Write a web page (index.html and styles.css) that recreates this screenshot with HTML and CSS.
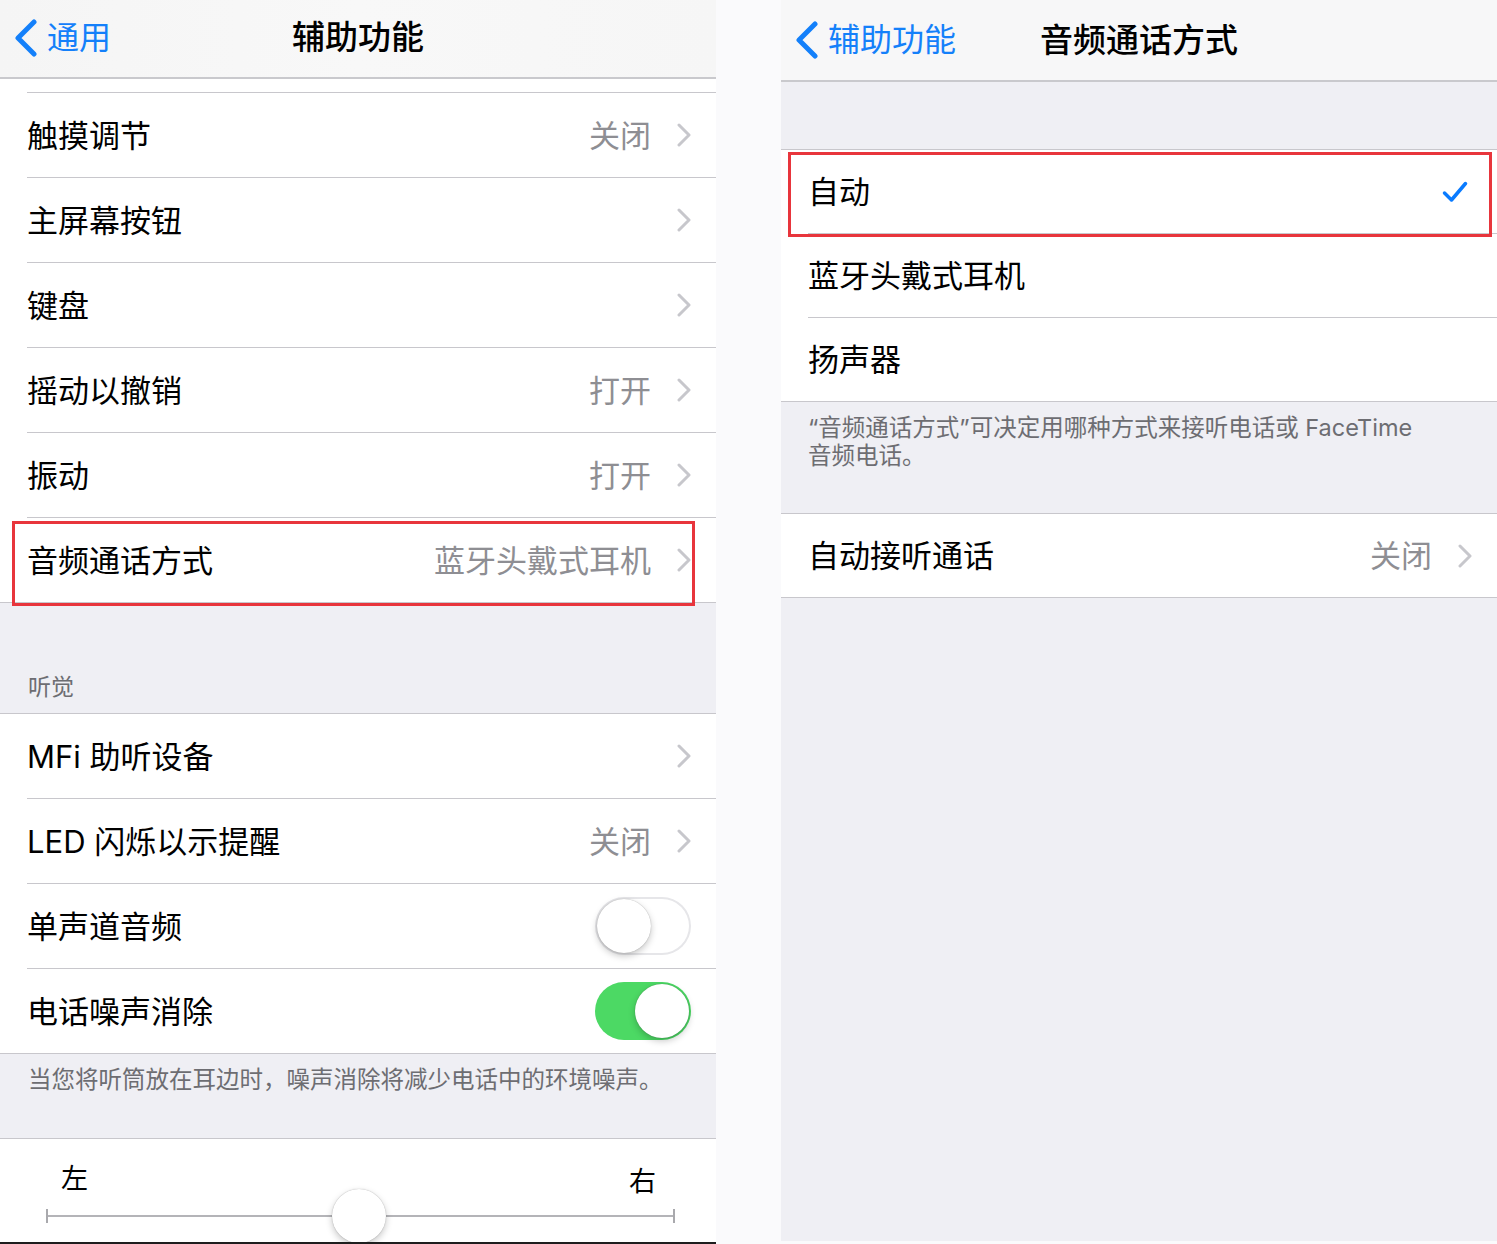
FILE: index.html
```html
<!DOCTYPE html>
<html lang="zh-CN">
<head>
<meta charset="utf-8">
<title>辅助功能 / 音频通话方式</title>
<link rel="stylesheet" href="styles.css">
</head>
<body>
<div class="screen">
  <section class="panel panel-left">
    <header class="nav nav-left">
      <div class="back">
        <svg class="nav-chev" viewBox="0 0 24 38"><polyline points="20,3 4,19 20,35"/></svg>
        <span>通用</span>
      </div>
      <h1 class="title">辅助功能</h1>
      <div></div>
    </header>

    <div class="list list-top">
      <div class="stub"></div>
      <div class="row"><div class="row-inner"><span class="label">触摸调节</span><span class="value">关闭</span><svg class="chev" viewBox="0 0 14 24"><polyline points="2,2 12,12 2,22"/></svg></div></div>
      <div class="row"><div class="row-inner"><span class="label">主屏幕按钮</span><svg class="chev" viewBox="0 0 14 24"><polyline points="2,2 12,12 2,22"/></svg></div></div>
      <div class="row"><div class="row-inner"><span class="label">键盘</span><svg class="chev" viewBox="0 0 14 24"><polyline points="2,2 12,12 2,22"/></svg></div></div>
      <div class="row"><div class="row-inner"><span class="label">摇动以撤销</span><span class="value">打开</span><svg class="chev" viewBox="0 0 14 24"><polyline points="2,2 12,12 2,22"/></svg></div></div>
      <div class="row"><div class="row-inner"><span class="label">振动</span><span class="value">打开</span><svg class="chev" viewBox="0 0 14 24"><polyline points="2,2 12,12 2,22"/></svg></div></div>
      <div class="row"><div class="row-inner"><span class="label">音频通话方式</span><span class="value">蓝牙头戴式耳机</span><svg class="chev" viewBox="0 0 14 24"><polyline points="2,2 12,12 2,22"/></svg></div><div class="mark mark-left"></div></div>
    </div>

    <div class="group-header">听觉</div>

    <div class="list">
      <div class="row"><div class="row-inner"><span class="label">MFi 助听设备</span><svg class="chev" viewBox="0 0 14 24"><polyline points="2,2 12,12 2,22"/></svg></div></div>
      <div class="row"><div class="row-inner"><span class="label">LED 闪烁以示提醒</span><span class="value">关闭</span><svg class="chev" viewBox="0 0 14 24"><polyline points="2,2 12,12 2,22"/></svg></div></div>
      <div class="row"><div class="row-inner"><span class="label">单声道音频</span><div class="switch"><div class="knob"></div></div></div></div>
      <div class="row"><div class="row-inner"><span class="label">电话噪声消除</span><div class="switch switch-on"><div class="knob"></div></div></div></div>
    </div>

    <p class="footer footer-left">当您将听筒放在耳边时，噪声消除将减少电话中的环境噪声。</p>

    <div class="slider-card">
      <div class="slider-labels"><span>左</span><span class="right-label">右</span></div>
      <div class="track">
        <div class="tick"></div>
        <div class="line"></div>
        <div class="tick"></div>
        <div class="thumb"></div>
      </div>
    </div>
  </section>

  <div class="gutter"></div>

  <section class="panel panel-right">
    <header class="nav nav-right">
      <div class="back">
        <svg class="nav-chev" viewBox="0 0 24 38"><polyline points="20,3 4,19 20,35"/></svg>
        <span>辅助功能</span>
      </div>
      <h1 class="title">音频通话方式</h1>
      <div></div>
    </header>

    <div class="spacer"></div>

    <div class="list">
      <div class="row"><div class="row-inner"><span class="label">自动</span><svg class="check" viewBox="0 0 26 22"><polyline points="2.5,12 9.5,19 23.5,2.5"/></svg></div><div class="mark mark-right"></div></div>
      <div class="row"><div class="row-inner"><span class="label">蓝牙头戴式耳机</span></div></div>
      <div class="row"><div class="row-inner"><span class="label">扬声器</span></div></div>
    </div>

    <p class="footer footer-right">“音频通话方式”可决定用哪种方式来接听电话或 FaceTime<br>音频电话。</p>

    <div class="list">
      <div class="row"><div class="row-inner"><span class="label">自动接听通话</span><span class="value">关闭</span><svg class="chev" viewBox="0 0 14 24"><polyline points="2,2 12,12 2,22"/></svg></div></div>
    </div>
  </section>
</div>
</body>
</html>
```

FILE: styles.css
```css
html, body {
  margin: 0;
  padding: 0;
}

body {
  background: #fafafc;
  font-family: Inter, "Noto Sans CJK SC", "Noto Sans", sans-serif;
  color: #000;
}

.screen {
  display: flex;
  width: 1497px;
  height: 1244px;
  overflow: hidden;
}

.panel {
  width: 716px;
  flex: none;
  background: #efeff4;
  display: flex;
  flex-direction: column;
  box-sizing: border-box;
}

.panel-left {
  height: 1244px;
  border-bottom: 2px solid #1e1e1e;
  overflow: hidden;
}

.panel-right {
  height: 1241px;
}

.gutter {
  width: 65px;
  flex: none;
}

/* navigation bar */
.nav {
  display: grid;
  grid-template-columns: 1fr auto 1fr;
  align-items: center;
  background: linear-gradient(90deg, #f5f5f5, #f8f8f8 50%, #f6f6f6);
  border-bottom: 2px solid #c9c9cd;
  box-sizing: border-box;
  flex: none;
}

.nav-left {
  height: 79px;
  padding-bottom: 2px;
}

.nav-right {
  height: 82px;
  background: #f7f7f8;
}

.back {
  display: flex;
  align-items: center;
  gap: 9px;
  padding-left: 14px;
  color: #1480fa;
  font-size: 32px;
  line-height: 1;
  white-space: nowrap;
}

.nav-chev {
  width: 24px;
  height: 38px;
  flex: none;
}

.nav-chev polyline {
  fill: none;
  stroke: #1480fa;
  stroke-width: 5;
  stroke-linecap: round;
  stroke-linejoin: round;
}

.title {
  margin: 0;
  font-size: 33px;
  font-weight: 500;
  line-height: 1;
  white-space: nowrap;
  color: #000;
}

.spacer {
  height: 67px;
  flex: none;
}

/* lists */
.list {
  background: #fff;
  border-top: 1px solid #c8c7cc;
  border-bottom: 1px solid #c8c7cc;
  flex: none;
}

.list-top {
  border-top: none;
}

.stub {
  height: 13px;
  margin-left: 27px;
  border-bottom: 1px solid #c8c7cc;
}

.row {
  position: relative;
  padding-left: 27px;
}

.row-inner {
  display: flex;
  align-items: center;
  height: 84px;
  padding-right: 25px;
  border-bottom: 1px solid #c8c7cc;
}

.row:last-child .row-inner {
  border-bottom: none;
}

.panel-right .row-inner {
  height: 83px;
}

.label {
  flex: 1;
  font-size: 31px;
  line-height: 1;
  white-space: nowrap;
}

.value {
  font-size: 31px;
  line-height: 1;
  color: #8e8e93;
  margin-right: 26px;
  white-space: nowrap;
}

.chev {
  width: 14px;
  height: 24px;
  flex: none;
}

.chev polyline {
  fill: none;
  stroke: #c7c7cc;
  stroke-width: 3;
  stroke-linecap: round;
  stroke-linejoin: round;
}

.check {
  width: 26px;
  height: 22px;
  margin-right: 4px;
  flex: none;
}

.check polyline {
  fill: none;
  stroke: #0a7bff;
  stroke-width: 3.5;
  stroke-linecap: round;
  stroke-linejoin: round;
}

/* red highlight boxes */
.mark {
  position: absolute;
  border: 3px solid #e8353c;
  box-sizing: border-box;
  pointer-events: none;
}

.mark-left {
  left: 12px;
  top: 3px;
  width: 683px;
  height: 85px;
}

.mark-right {
  left: 7px;
  top: 2px;
  width: 704px;
  height: 85px;
}

/* section header / footers */
.group-header {
  height: 110px;
  box-sizing: border-box;
  display: flex;
  align-items: flex-end;
  padding: 0 0 14px 28px;
  font-size: 23px;
  line-height: 23px;
  color: #6d6d72;
  flex: none;
}

.footer {
  margin: 0;
  box-sizing: border-box;
  color: #6d6d72;
  font-size: 23.5px;
  flex: none;
}

.footer-left {
  height: 84px;
  padding: 14px 20px 0 28px;
  line-height: 24px;
  white-space: nowrap;
}

.footer-right {
  height: 111px;
  padding: 12px 20px 0 27px;
  line-height: 28px;
}

/* switches */
.switch {
  width: 96px;
  height: 58px;
  border-radius: 29px;
  box-sizing: border-box;
  padding: 2px;
  display: flex;
  align-items: center;
  box-shadow: inset 0 0 0 2px #e6e6e9;
  flex: none;
}

.switch-on {
  background: #4cd964;
  justify-content: flex-end;
  box-shadow: none;
}

.knob {
  width: 54px;
  height: 54px;
  border-radius: 50%;
  background: #fff;
  box-shadow: 0 3px 7px rgba(0, 0, 0, 0.22), 0 0 1px rgba(0, 0, 0, 0.35);
}

/* balance slider */
.slider-card {
  flex: 1;
  background: #fff;
  border-top: 1px solid #c8c7cc;
}

.slider-labels {
  display: flex;
  justify-content: space-between;
  padding: 26px 60px 0 61px;
  font-size: 27px;
  line-height: 27px;
  color: #000;
}

.right-label {
  position: relative;
  top: 3px;
}

.track {
  position: relative;
  display: flex;
  align-items: center;
  height: 14px;
  margin: 17px 41px 0 46px;
}

.tick {
  width: 2px;
  height: 14px;
  background: #a9a9ad;
}

.line {
  flex: 1;
  height: 2px;
  background: #b4b4b8;
}

.thumb {
  position: absolute;
  left: 286px;
  top: -20px;
  width: 54px;
  height: 54px;
  border-radius: 50%;
  background: #fff;
  box-shadow: 0 3px 7px rgba(0, 0, 0, 0.22), 0 0 1px rgba(0, 0, 0, 0.35);
}
```
